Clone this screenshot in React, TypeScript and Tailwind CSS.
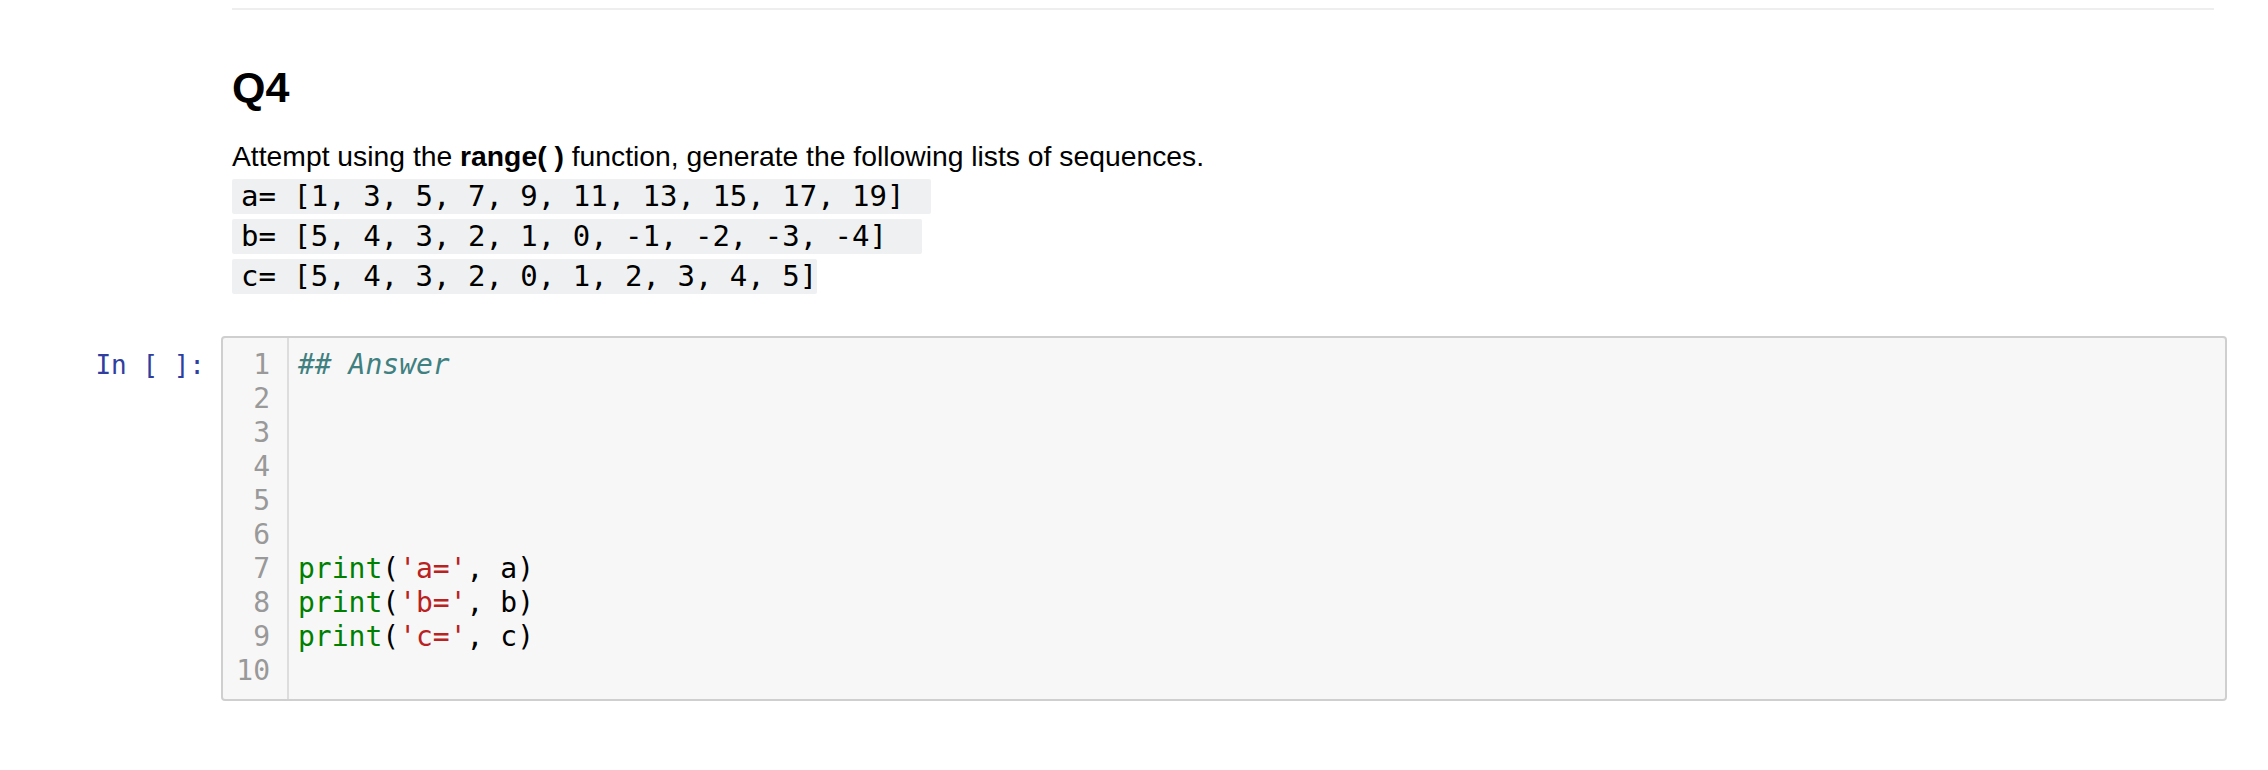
import React from 'react'

const mono = { fontFamily: '"DejaVu Sans Mono", Menlo, monospace' }

function InlineCode({ text, pad }: { text: string; pad: string }) {
    return (
        <div className="h-[40px]">
            <span className={`inline-block h-[35px] bg-[#eff0f1] pl-[9px] ${pad} text-[29px] leading-[35px] text-black whitespace-pre rounded-[2px] font-['DejaVu_Sans_Mono',monospace]`}>
                {text}
            </span>
        </div>
    )
}

const lines: React.ReactNode[] = [
    <span className="italic text-[#408080]">## Answer</span>,
    '',
    '',
    '',
    '',
    '',
    <><span className="text-[#008000]">print</span>(<span className="text-[#ba2121]">'a='</span>, a)</>,
    <><span className="text-[#008000]">print</span>(<span className="text-[#ba2121]">'b='</span>, b)</>,
    <><span className="text-[#008000]">print</span>(<span className="text-[#ba2121]">'c='</span>, c)</>,
    '',
]

export default function App() {
    return (
        <div className="w-[2268px] h-[770px] bg-white overflow-hidden font-['Liberation_Sans',Arial,sans-serif] text-black">
            {/* markdown cell */}
            <div className="flex pt-[8px]">
                <div className="w-[221px] shrink-0" />
                <div className="w-[2006px] pl-[11px] pr-[13px]">
                    <div className="h-[2px] bg-[#eeeeee]" />
                    <h2 className="mt-[56px] text-[43px] leading-[43px] font-bold">Q4</h2>
                    <p className="mt-[30px] text-[28.3px] leading-[34px]">
                        Attempt using the <b>range( )</b> function, generate the following lists of sequences.
                    </p>
                    <div className="mt-[6px]">
                        <InlineCode text="a= [1, 3, 5, 7, 9, 11, 13, 15, 17, 19] " pad="pr-[9px]" />
                        <InlineCode text="b= [5, 4, 3, 2, 1, 0, -1, -2, -3, -4] " pad="pr-[18px]" />
                        <InlineCode text="c= [5, 4, 3, 2, 0, 1, 2, 3, 4, 5]" pad="pr-[0px]" />
                    </div>
                </div>
            </div>

            {/* code cell */}
            <div className="flex mt-[37px]">
                <div className="w-[221px] shrink-0 pr-[16px] pt-[12px] text-right">
                    <span className="text-[26px] leading-[34px] text-[#303f9f]" style={mono}>In&nbsp;[&nbsp;]:</span>
                </div>
                <div className="w-[2006px] h-[365px] flex border-2 border-[#cfcfcf] rounded-[4px] bg-[#f7f7f7]" style={mono}>
                    <div className="w-[66px] border-r-2 border-[#dddddd] pt-[10px] pr-[17px] text-right text-[28px] leading-[34px] text-[#999999]">
                        {lines.map((_, i) => (
                            <div key={i}>{i + 1}</div>
                        ))}
                    </div>
                    <div className="flex-1 pt-[10px] pl-[9px] text-[28px] leading-[34px] whitespace-pre">
                        {lines.map((l, i) => (
                            <div key={i} className="h-[34px]">{l}</div>
                        ))}
                    </div>
                </div>
            </div>
        </div>
    )
}
